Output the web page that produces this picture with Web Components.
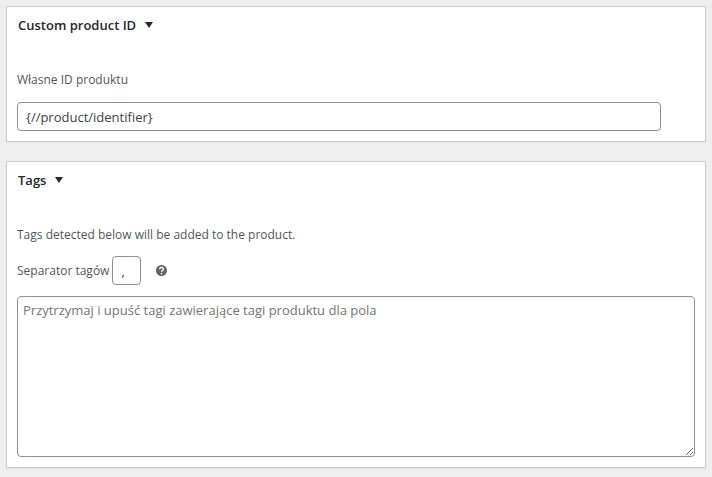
<!DOCTYPE html>
<html lang="pl">
<head>
<meta charset="utf-8">
<meta name="viewport" content="width=device-width, initial-scale=1">
<title>Product import</title>
<style>
  body {
    margin: 0;
    padding: 6px;
    background: #efefef;
    color: #50575e;
    font: 12px/20px "Open Sans", "Noto Sans", sans-serif;
  }
</style>
</head>
<body>
<import-options></import-options>

<script>
const HELP_ICON = '<svg width="11" height="11" viewBox="0 0 22 22" aria-hidden="true"><circle cx="11" cy="11" r="11" fill="#646464"></circle><path d="M7.4 8.3a3.6 3.3 0 1 1 5.5 2.8c-1.3.9-1.9 1.3-1.9 2.6" fill="none" stroke="#fff" stroke-width="2.8"></path><circle cx="11" cy="17" r="1.7" fill="#fff"></circle></svg>';

const FIELD_STYLES = `
  input, textarea {
    display: block;
    box-sizing: border-box;
    margin: 0;
    border: 1px solid #8c8f94;
    border-radius: 4px;
    background: #fff;
    color: #3c434a;
    font: inherit;
    font-size: 13px;
  }
  input:focus, textarea:focus {
    border-color: #2271b1;
    outline: 1px solid #2271b1;
  }
`;

customElements.define('option-panel', class OptionPanel extends HTMLElement {
  constructor() {
    super();
    this.attachShadow({ mode: 'open' });
    this.shadowRoot.innerHTML = `
      <style>
        :host {
          display: block;
          border: 1px solid #ccc;
          background: #fff;
          box-shadow: 0 1px 1px rgba(0, 0, 0, 0.04);
        }
        h3 {
          margin: 0;
        }
        button {
          display: flex;
          align-items: center;
          gap: 9px;
          width: 100%;
          height: 36px;
          padding: 0 11px;
          border: none;
          background: none;
          color: #23282d;
          font: inherit;
          font-size: 13px;
          font-weight: 600;
          cursor: pointer;
        }
        svg {
          display: block;
        }
        button[aria-expanded="false"] svg {
          transform: rotate(-90deg);
        }
        .body {
          padding: 27px 10px 10px;
        }
        .body[hidden] {
          display: none;
        }
      </style>
      <h3>
        <button type="button" aria-expanded="true" aria-controls="body">
          <slot name="heading"></slot>
          <svg width="8" height="6" viewBox="0 0 8 6" aria-hidden="true"><path d="M0 0h8L4 6z" fill="currentColor"></path></svg>
        </button>
      </h3>
      <div class="body" id="body"><slot></slot></div>
    `;
  }

  connectedCallback() {
    const button = this.shadowRoot.querySelector('button');
    button.addEventListener('click', () => {
      const open = button.getAttribute('aria-expanded') === 'true';
      button.setAttribute('aria-expanded', String(!open));
      this.shadowRoot.getElementById('body').hidden = open;
    });
  }
});

customElements.define('text-option', class TextOption extends HTMLElement {
  constructor() {
    super();
    this.attachShadow({ mode: 'open' });
    this.shadowRoot.innerHTML = `
      <style>
        ${FIELD_STYLES}
        :host {
          display: flex;
          flex-direction: column;
          align-items: flex-start;
          gap: 12px;
        }
        input {
          width: 95%;
          height: 29px;
          padding: 0 8px;
        }
      </style>
      <label for="field"></label>
      <input type="text" id="field">
    `;
  }

  connectedCallback() {
    this.shadowRoot.querySelector('label').textContent = this.getAttribute('label');
    this.shadowRoot.querySelector('input').value = this.getAttribute('value') ?? '';
  }
});

customElements.define('tag-options', class TagOptions extends HTMLElement {
  constructor() {
    super();
    this.attachShadow({ mode: 'open' });
    this.shadowRoot.innerHTML = `
      <style>
        ${FIELD_STYLES}
        :host {
          display: flex;
          flex-direction: column;
          gap: 11px;
        }
        p {
          margin: 0;
        }
        .separator {
          display: flex;
          align-items: center;
        }
        input {
          width: 29px;
          height: 29px;
          margin-left: 3px;
          padding: 0 8px;
        }
        button {
          margin-left: 15px;
          padding: 0;
          border: none;
          background: none;
          cursor: help;
        }
        svg {
          display: block;
        }
        textarea {
          width: 100%;
          height: 161px;
          padding: 3px 5px;
          resize: vertical;
        }
        textarea::placeholder {
          color: #757575;
        }
      </style>
      <p>Tags detected below will be added to the product.</p>
      <div class="separator">
        <label for="separator">Separator tagów</label>
        <input type="text" id="separator" value=",">
        <button type="button" aria-label="Pomoc">${HELP_ICON}</button>
      </div>
      <textarea aria-label="Tagi" placeholder="Przytrzymaj i upuść tagi zawierające tagi produktu dla pola"></textarea>
    `;
  }
});

customElements.define('import-options', class ImportOptions extends HTMLElement {
  constructor() {
    super();
    this.attachShadow({ mode: 'open' });
    this.shadowRoot.innerHTML = `
      <style>
        :host {
          display: flex;
          flex-direction: column;
          gap: 19px;
        }
      </style>
      <option-panel>
        <span slot="heading">Custom product ID</span>
        <text-option label="Własne ID produktu" value="{//product/identifier}"></text-option>
      </option-panel>
      <option-panel>
        <span slot="heading">Tags</span>
        <tag-options></tag-options>
      </option-panel>
    `;
  }
});
</script>
</body>
</html>
